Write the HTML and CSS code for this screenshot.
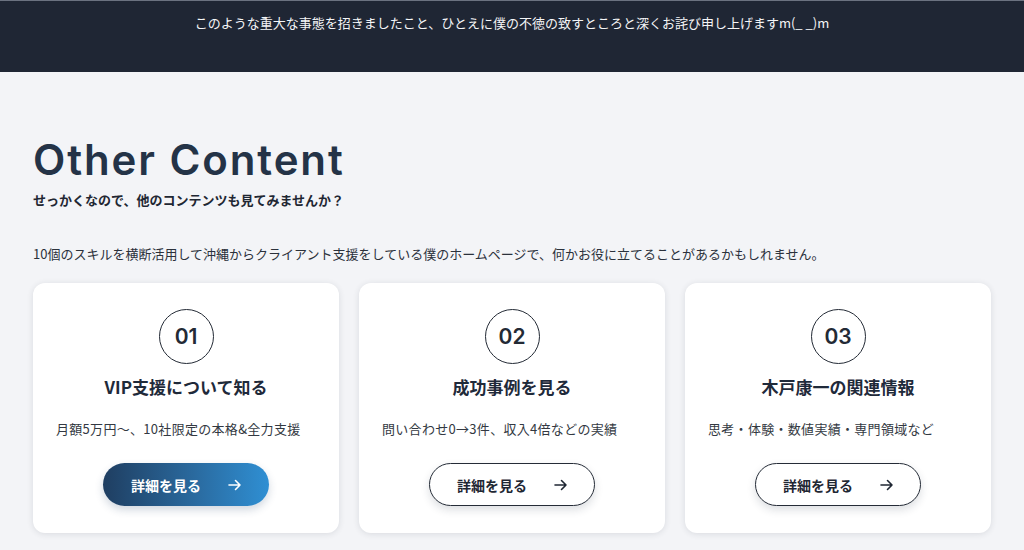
FILE: index.html
```html
<!DOCTYPE html>
<html lang="ja">
<head>
<meta charset="utf-8">
<link rel="stylesheet" href="styles.css">
</head>
<body>
<header class="notice">
  <p>このような重大な事態を招きましたこと、ひとえに僕の不徳の致すところと深くお詫び申し上げますm(_ _)m</p>
</header>
<main class="other">
  <h2 class="other-title">Other Content</h2>
  <p class="other-sub">せっかくなので、他のコンテンツも見てみませんか？</p>
  <p class="other-lead">10個のスキルを横断活用して沖縄からクライアント支援をしている僕のホームページで、何かお役に立てることがあるかもしれません。</p>
  <div class="cards">
    <div class="card">
      <div class="num">01</div>
      <h3 class="card-title">VIP支援について知る</h3>
      <p class="card-desc">月額5万円〜、10社限定の本格&amp;全力支援</p>
      <a class="btn btn-primary" href="#"><span>詳細を見る</span><svg class="arrow" viewBox="0 0 16 16" width="16" height="16"><path d="M2 8h11M8.5 3.5 13 8l-4.5 4.5" fill="none" stroke="currentColor" stroke-width="1.6" stroke-linecap="round" stroke-linejoin="round"/></svg></a>
    </div>
    <div class="card">
      <div class="num">02</div>
      <h3 class="card-title">成功事例を見る</h3>
      <p class="card-desc">問い合わせ0→3件、収入4倍などの実績</p>
      <a class="btn btn-outline" href="#"><span>詳細を見る</span><svg class="arrow" viewBox="0 0 16 16" width="16" height="16"><path d="M2 8h11M8.5 3.5 13 8l-4.5 4.5" fill="none" stroke="currentColor" stroke-width="1.6" stroke-linecap="round" stroke-linejoin="round"/></svg></a>
    </div>
    <div class="card">
      <div class="num">03</div>
      <h3 class="card-title">木戸康一の関連情報</h3>
      <p class="card-desc">思考・体験・数値実績・専門領域など</p>
      <a class="btn btn-outline" href="#"><span>詳細を見る</span><svg class="arrow" viewBox="0 0 16 16" width="16" height="16"><path d="M2 8h11M8.5 3.5 13 8l-4.5 4.5" fill="none" stroke="currentColor" stroke-width="1.6" stroke-linecap="round" stroke-linejoin="round"/></svg></a>
    </div>
  </div>
</main>
</body>
</html>
```
FILE: styles.css
```css
* { box-sizing: border-box; }
html, body { margin: 0; padding: 0; }
body {
  background: #f3f4f7;
  font-family: "Noto Sans CJK JP", "Noto Sans", sans-serif;
  color: #2a2f38;
  width: 1024px;
  height: 550px;
  overflow: hidden;
}
.notice {
  background: #1f2634;
  border-top: 1px solid #6b7280;
  height: 72px;
  padding-top: 12px;
}
.notice p {
  margin: 0;
  text-align: center;
  color: #f4f5f7;
  font-size: 13px;
  line-height: 20px;
}
.other {
  padding: 62px 33px 0;
}
.other-title {
  margin: 0;
  font-family: "Inter", "Noto Sans", sans-serif;
  font-weight: 600;
  font-size: 42px;
  line-height: 52px;
  color: #243347;
  letter-spacing: 1.9px;
}
.other-sub {
  margin: 4px 0 0;
  font-size: 13px;
  font-weight: 700;
  line-height: 20px;
  color: #1f2733;
}
.other-lead {
  margin: 34px 0 0;
  font-size: 13px;
  line-height: 20px;
  color: #2b313b;
}
.cards {
  display: grid;
  grid-template-columns: repeat(3, 306px);
  gap: 20px;
  margin-top: 19px;
}
.card {
  background: #fff;
  border-radius: 12px;
  height: 250px;
  box-shadow: 0 1px 6px rgba(30, 40, 60, 0.12);
  display: flex;
  flex-direction: column;
  align-items: center;
  padding-top: 26px;
}
.num {
  width: 55px;
  height: 55px;
  border: 1.5px solid #232a35;
  border-radius: 50%;
  display: flex;
  align-items: center;
  justify-content: center;
  font-family: "Inter", "Noto Sans", sans-serif;
  font-weight: 600;
  font-size: 21px;
  color: #232a35;
}
.card-title {
  margin: 10px 0 0;
  font-size: 17px;
  font-weight: 700;
  line-height: 26px;
  color: #1f2a3a;
}
.card-desc {
  align-self: stretch;
  margin: 19px 0 0;
  padding-left: 23px;
  font-size: 13px;
  letter-spacing: 0.3px;
  line-height: 20px;
  color: #333942;
}
.btn {
  margin-top: 24px;
  width: 166px;
  height: 43px;
  border-radius: 22px;
  display: flex;
  align-items: center;
  justify-content: center;
  gap: 26px;
  text-decoration: none;
  font-size: 14px;
  font-weight: 700;
  padding-left: 2px;
}
.btn-primary {
  background: linear-gradient(90deg, #1f3e61 0%, #2a6a9f 55%, #2f8fd3 100%);
  color: #fff;
  box-shadow: 0 4px 8px rgba(30, 60, 100, 0.2);
}
.btn-outline {
  background: #fff;
  color: #1f2733;
  border: 1.8px solid #252c37;
  box-shadow: 0 4px 8px rgba(30, 40, 60, 0.15);
}
.arrow { display: block; }
```
